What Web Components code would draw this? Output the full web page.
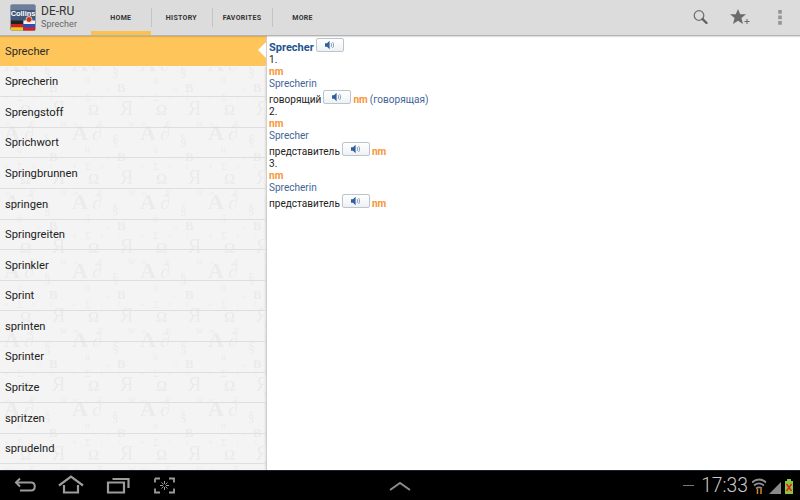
<!DOCTYPE html>
<html>
<head>
<meta charset="utf-8">
<style>
  html, body { margin:0; height:100%; }
  body { width:800px; height:500px; overflow:hidden; font-family:Roboto,"Liberation Sans",sans-serif; display:flex; flex-direction:column; }
  main { flex:1; display:flex; min-height:0; }
</style>
</head>
<body>
<action-bar title="DE-RU" subtitle="Sprecher"></action-bar>
<main>
  <word-list>
    <word-item selected>Sprecher</word-item>
    <word-item>Sprecherin</word-item>
    <word-item>Sprengstoff</word-item>
    <word-item>Sprichwort</word-item>
    <word-item>Springbrunnen</word-item>
    <word-item>springen</word-item>
    <word-item>Springreiten</word-item>
    <word-item>Sprinkler</word-item>
    <word-item>Sprint</word-item>
    <word-item>sprinten</word-item>
    <word-item>Sprinter</word-item>
    <word-item>Spritze</word-item>
    <word-item>spritzen</word-item>
    <word-item>sprudelnd</word-item>
  </word-list>
  <entry-view>
    <entry-line head>Sprecher <sound-btn></sound-btn></entry-line>
    <entry-line>1.</entry-line>
    <entry-line pos>nm</entry-line>
    <entry-line link>Sprecherin</entry-line>
    <entry-line tall>говорящий <sound-btn></sound-btn> <b>nm</b> <i>(говорящая)</i></entry-line>
    <entry-line>2.</entry-line>
    <entry-line pos>nm</entry-line>
    <entry-line link>Sprecher</entry-line>
    <entry-line tall>представитель <sound-btn></sound-btn> <b>nm</b></entry-line>
    <entry-line>3.</entry-line>
    <entry-line pos>nm</entry-line>
    <entry-line link>Sprecherin</entry-line>
    <entry-line tall>представитель <sound-btn></sound-btn> <b>nm</b></entry-line>
  </entry-view>
</main>
<system-bar></system-bar>

<script>
class ActionBar extends HTMLElement {
  connectedCallback() {
    const tabs = ['HOME','HISTORY','FAVORITES','MORE'];
    this.attachShadow({mode:'open'}).innerHTML = `
      <style>
        :host { display:flex; height:36px; flex:none; box-sizing:border-box; background:#dcdcdc; border-bottom:1px solid #b4b4b4; box-shadow:0 1px 1px rgba(0,0,0,.12); position:relative; z-index:2; color:#333; }
        .logo { width:26px; height:27px; margin:4px 5px 0 10px; flex:none; }
        .titles { width:50px; flex:none; padding-top:3.500px; }
        .t1 { font-size:12px; line-height:14px; color:#333; }
        .t2 { font-size:9px; line-height:12px; color:#666; letter-spacing:.05px; }
        .tabs { display:flex; margin-left:-.500px; }
        .tab { width:60.6px; box-sizing:border-box; height:35px; display:flex; align-items:center; justify-content:center; font-size:7px; font-weight:700; letter-spacing:.3px; color:#333; position:relative; padding-top:1px; }
        .tab + .tab::before { content:''; position:absolute; left:0; top:8px; height:19px; width:1px; background:#c4c4c4; }
        .tab.on::after { content:''; position:absolute; left:0; right:0; bottom:0; height:4px; background:#fcc04c; }
        .tools { margin-left:auto; display:flex; align-items:center; height:35px; padding-right:16px; }
        .tools button { all:unset; display:block; width:40px; height:35px; }
        svg { display:block; }
      </style>
      <svg class="logo" viewBox="0 0 26 27">
        <rect x=".5" y=".5" width="25" height="26" rx="2" fill="#44587a" stroke="#8c98a8"/>
        <rect x="1" y="1" width="24" height="5" fill="#6d7f98"/>
        <text x="13" y="12" font-family="Liberation Sans" font-size="7.400" font-weight="700" fill="#fff" text-anchor="middle">Collins</text>
        <rect x="1" y="16.500" width="12" height="3.500" fill="#222"/><rect x="1" y="20" width="12" height="3.300" fill="#d02020"/><rect x="1" y="23.300" width="12" height="3.200" fill="#f2c81c"/>
        <rect x="13.500" y="16.500" width="11.500" height="3.500" fill="#f4f4f4"/><rect x="13.500" y="20" width="11.500" height="3.300" fill="#2a4fc0"/><rect x="13.500" y="23.300" width="11.500" height="3.200" fill="#d82020"/>
        <circle cx="19" cy="15.500" r="3" fill="#c83818" stroke="#fff" stroke-width=".7"/>
      </svg>
      <div class="titles"><div class="t1">${this.getAttribute('title')}</div><div class="t2">${this.getAttribute('subtitle')}</div></div>
      <div class="tabs">${tabs.map((t,i)=>`<div class="tab ${i==0?'on':''}">${t}</div>`).join('')}</div>
      <div class="tools">
        <button><svg width="40" height="35" viewBox="0 0 40 35"><circle cx="19" cy="15.500" r="4.800" fill="none" stroke="#707070" stroke-width="1.300"/><path d="M22.500 19l4 4" stroke="#606060" stroke-width="2.400" stroke-linecap="round"/></svg></button>
        <button><svg width="40" height="35" viewBox="0 0 40 35"><path d="M18 9l2.200 5.300h5.800l-4.600 3.700 1.600 6-5-3.200-5 3.200 1.600-6-4.600-3.700h5.800z" fill="#6a6a6a"/><path d="M27 19v5M24.500 21.500h5" stroke="#6a6a6a" stroke-width="1"/></svg></button>
        <button style="width:24px"><svg width="24" height="35" viewBox="0 0 24 35"><path d="M18.200 10h3.600v3.800h-3.600zM18.200 15.500h3.600v3.800h-3.600zM18.200 21h3.600v3.800h-3.600z" fill="#959595"/></svg></button>
      </div>`;
  }
}

class WordList extends HTMLElement {
  constructor() {
    super();
    // x, baseline, size, weight, glyph: one tile of the faint letter wallpaper
    const glyphs = [['A',4,47,22,1],['∂',24,47,20,0],['§',44,52,14,0],['ü',17,60,10,0],['B',49,68,13,1],['o',38,67,7,0],
      ['Σ',17,8,10,0],['κ',5,6,7,0],['γ',32,6,7,0],['ζ',50,6,7,0],['Ω',20,22,14,1],['Я',52,22,20,0],['Æ',28,34,8,0],['W',60,34,8,0],['œ',5,33,7,0]];
    this.attachShadow({mode:'open'}).innerHTML = `
      <style>
        :host { display:block; width:266px; flex:none; position:relative; background:#f4f4f4; border-right:1px solid #cfcfcf; overflow:hidden; box-shadow:inset -2px 0 2px -1px rgba(0,0,0,.1); }
        svg { position:absolute; inset:0; width:100%; height:100%; }
        .rows { position:relative; }
      </style>
      <svg aria-hidden="true"><defs><pattern id="p" width="68" height="69" patternUnits="userSpaceOnUse" y="-12">
        ${glyphs.map(g=>`<text x="${g[1]}" y="${g[2]}" font-family="Liberation Serif" font-size="${g[3]}" font-weight="${g[4]?700:400}" fill="#ebebeb">${g[0]}</text>`).join('')}
      </pattern></defs><rect width="100%" height="100%" fill="url(#p)"/></svg>
      <div class="rows"><slot></slot></div>`;
  }
}

class WordItem extends HTMLElement {
  constructor() {
    super();
    this.attachShadow({mode:'open'}).innerHTML = `
      <style>
        :host { display:flex; align-items:center; box-sizing:border-box; height:30.6px; padding:.5px 0 0 5px; font-size:11.2px; color:#222; border-bottom:1px solid #dedede; position:relative; }
        :host([selected]) { background:#fdc55a; border-bottom-color:#f4f4f4; color:#2a2a2a; }
        :host([selected])::after { content:''; position:absolute; right:-1px; top:5px; border:9px solid transparent; border-left-width:0; border-right-color:#fff; border-right-width:9px; }
      </style><slot></slot>`;
  }
}

class EntryView extends HTMLElement {
  constructor() {
    super();
    this.attachShadow({mode:'open'}).innerHTML = `
      <style>:host { display:block; flex:1; background:#fff; padding:5px 0 0 2px; font-size:10.05px; color:#222; }</style><slot></slot>`;
  }
}

class EntryLine extends HTMLElement {
  constructor() {
    super();
    this.attachShadow({mode:'open'}).innerHTML = `
      <style>
        :host { display:flex; align-items:flex-end; gap:2px; height:12px; line-height:12px; white-space:normal; }
        :host([head]) { height:13px; line-height:13px; font-weight:700; font-size:11px; color:#23548f; }
        :host([pos]) { color:#f7963a; font-weight:700; }
        :host([link]) { color:#3f6597; }
        :host([tall]) { height:16px; }
        ::slotted(b) { color:#f7963a; font-weight:700; }
        ::slotted(i) { color:#3f6597; font-style:normal; }
      </style><slot></slot>`;
  }
}

class SoundBtn extends HTMLElement {
  constructor() {
    super();
    this.attachShadow({mode:'open'}).innerHTML = `
      <style>
        :host { display:inline-flex; align-items:center; justify-content:center; box-sizing:border-box; width:28px; height:14px; border:1px solid #bcc4cc; border-radius:2px; background:linear-gradient(#fff,#eef1f4); margin-bottom:2px; }
        svg { display:block; }
      </style>
      <svg width="12" height="10" viewBox="0 0 12 10"><path d="M1 3.200h2l2.600-2.400v8.400L3 6.800H1z" fill="#2f5f9e"/><path d="M7 3c.8 1.200.8 2.800 0 4M8.600 2c1.300 1.900 1.300 4.100 0 6" fill="none" stroke="#6d8cb4" stroke-width=".8"/></svg>`;
  }
}

class SystemBar extends HTMLElement {
  constructor() {
    super();
    this.attachShadow({mode:'open'}).innerHTML = `
      <style>
        :host { display:flex; align-items:center; height:30px; flex:none; box-sizing:border-box; background:#000; border-top:1px solid #1a2230; color:#b4b4b4; position:relative; }
        .left { display:flex; align-items:center; }
        .mid { position:absolute; left:389px; top:9px; }
        .right { margin-left:auto; display:flex; align-items:center; }
        .dash { width:11px; height:1.500px; background:#777; margin-right:7px; }
        .clock { font-size:19.300px; font-weight:300; color:#c8c8c8; font-family:Roboto,sans-serif; margin-right:4px; }
        svg { display:block; }
      </style>
      <div class="left">
        <svg width="188" height="29" viewBox="0 0 188 29" fill="none" stroke="#9c9c9c" stroke-width="2">
          <path d="M20 7.500l-4 4 4 4"/><path d="M16 11.500h15c5 0 5 8 0 8H20"/>
          <path d="M59 14.500L71 5.500l12 9M64 14v7.500h14V14" stroke-width="2.200"/>
          <path d="M108 11.500h16v10h-16zM112.500 8h16v9" stroke-width="2.200"/>
          <path d="M155 7.500h5M169 7.500h5v4M174 17.500v4h-5M160 21.500h-5v-4M155 11.500v-4" stroke-width="1.800"/>
          <path d="M164.500 10v3M164.500 16v3M160 14.500h3M166 14.500h3M161.500 11.500l2 2M167.500 17.500l-2-2M167.500 11.500l-2 2M161.500 17.500l2-2" stroke-width="1"/>
        </svg>
      </div>
      <svg class="mid" width="22" height="12" viewBox="0 0 22 12" fill="none" stroke="#8c8c8c" stroke-width="2"><path d="M1 10L11 3l10 7"/></svg>
      <div class="right">
        <div class="dash"></div>
        <div class="clock">17:33</div>
        <svg width="48" height="20" viewBox="0 0 48 20" fill="none">
          <path d="M0 6.500c4-4 10-4 14 0M2 9.500c3-2.700 7-2.700 10 0M4 12.500c2-1.500 4-1.500 6 0" stroke="#8e8e8e" stroke-width="1.800"/>
          <path d="M5.500 13v5M9 13v5" stroke="#d8861e" stroke-width="1.500"/>
          <path d="M17 18L29 6v12z" fill="#8a8a8a"/>
          <rect x="33" y="5" width="8" height="13" fill="#8cc63f"/><rect x="35" y="3" width="4" height="2" fill="#8cc63f"/>
          <path d="M34.500 8l5 7M39.500 8l-5 7" stroke="#e02020" stroke-width="1.500"/>
        </svg>
      </div>`;
  }
}

customElements.define('action-bar', ActionBar);
customElements.define('word-list', WordList);
customElements.define('word-item', WordItem);
customElements.define('entry-view', EntryView);
customElements.define('entry-line', EntryLine);
customElements.define('sound-btn', SoundBtn);
customElements.define('system-bar', SystemBar);
</script>
</body>
</html>
